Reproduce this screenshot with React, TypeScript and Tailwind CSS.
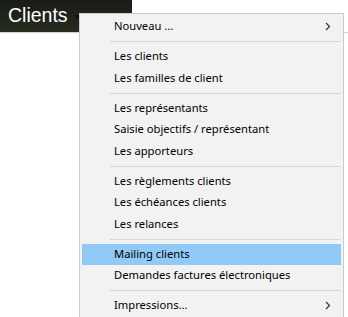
import React from 'react';

type Entry = { label: string; sub?: boolean; active?: boolean } | 'sep';

const entries: Entry[] = [
  { label: 'Nouveau ...', sub: true },
  'sep',
  { label: 'Les clients' },
  { label: 'Les familles de client' },
  'sep',
  { label: 'Les représentants' },
  { label: 'Saisie objectifs / représentant' },
  { label: 'Les apporteurs' },
  'sep',
  { label: 'Les règlements clients' },
  { label: 'Les échéances clients' },
  { label: 'Les relances' },
  'sep',
  { label: 'Mailing clients', active: true },
  { label: 'Demandes factures électroniques' },
  'sep',
  { label: 'Impressions...', sub: true },
];

const Chevron = () => (
  <svg width="6" height="9" viewBox="0 0 6 9" className="ml-auto mr-[10px]">
    <path d="M1 1 L4.5 4.5 L1 8" fill="none" stroke="#333" strokeWidth="1.2" />
  </svg>
);

const App: React.FC = () => {
  return (
    <div className="relative w-[348px] h-[317px] overflow-hidden bg-white" style={{ fontFamily: '"Noto Sans", sans-serif' }}>
      {/* header bar */}
      <div className="h-[33px] border-b border-[#d0d0d0]">
        <div className="w-[132px] h-[32px] bg-gradient-to-b from-[#1a1d16] to-[#262b20] flex items-center gap-[6px] pl-[8px]">
          <span className="text-white text-[19.5px] leading-none" style={{ fontFamily: '"Liberation Sans", Arial, sans-serif' }}>
            Clients
          </span>
          <span className="mt-[2px] w-0 h-0 border-l-[4px] border-r-[4px] border-t-[4px] border-l-transparent border-r-transparent border-t-[#111]" />
        </div>
      </div>

      {/* dropdown menu */}
      <div className="absolute left-[79px] top-[13px] w-[265px] bg-[#f2f2f2] border border-[#cccccc] p-[2px]">
        {entries.map((e, i) =>
          e === 'sep' ? (
            <div key={i} className="h-[8.5px] flex items-center pl-[28px]">
              <div className="h-px w-full bg-[#d7d7d7]" />
            </div>
          ) : (
            <div
              key={i}
              className={`h-[21.5px] flex items-center pl-[32px] text-[11.2px] text-black ${e.active ? 'bg-[#91c9f7]' : ''}`}
            >
              {e.label}
              {e.sub && <Chevron />}
            </div>
          )
        )}
      </div>
    </div>
  );
};

export default App;
